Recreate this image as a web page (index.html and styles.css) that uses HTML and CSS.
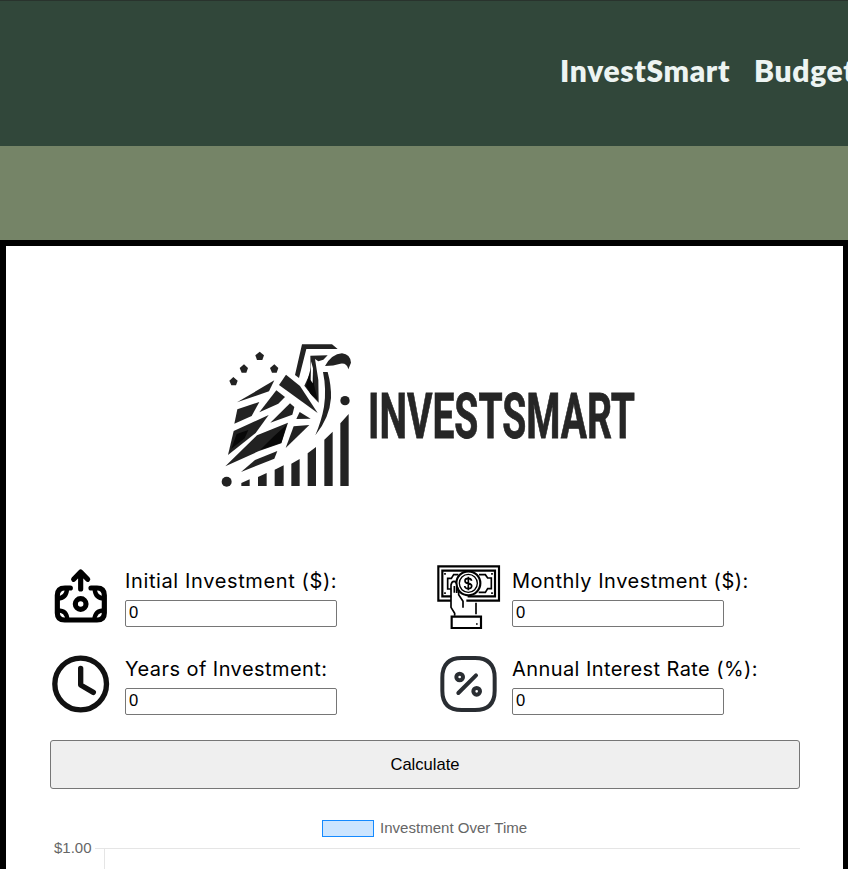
FILE: index.html
```html
<!DOCTYPE html>
<html lang="en">
<head>
<meta charset="utf-8">
<title>InvestSmart</title>
<link rel="stylesheet" href="styles.css">
</head>
<body>
<header class="header">
  <nav class="nav"><a class="nav-invest">InvestSmart</a><a class="nav-budget">Budget</a></nav>
</header>
<main class="card">
  <div class="logo">
    <svg class="eagle" viewBox="0 0 480 510" fill="#222">
      <path d="M276 43H366L383 57H289L267 144L255 135Z"/>
      <path d="M301 77L353 76L340 89L325 94L315 87L325 150L326 218L306 197L283 167L302 126Z"/>
      <path d="M345 108Q365 72 396 70Q421 73 423 98L415 118Q411 98 391 101Q371 108 345 108Z"/>
      <path d="M339 126H353Q364 165 363 204Q359 263 316 316Q335 270 342 230Q350 179 339 126Z"/>
      <path d="M228 134L270 168L323 249L207 165Z"/>
      <path d="M193 151L177 184L81 217Z"/>
      <path d="M199 181L225 201L205 221L148 247Z"/>
      <path d="M240 220L253 231L247 254L181 278Z"/>
      <path d="M82 238L148 216L125 258L73 281Z"/>
      <path d="M269 246L302 266L259 267Z"/>
      <path d="M71 303L176 255L137 309L54 375Z"/>
      <path d="M251 289L298 285L227 354Z"/>
      <path d="M141 316L234 278L214 340L145 364L46 409Z"/>
      <path d="M135 390L202 363L193 386L93 426Z"/>
      <path d="M94 459L119 448V468H94ZM144 441L170 429V468H144ZM194 419L221 406V468H194ZM244 401L269 387V468H244ZM293 370L318 351V468H293ZM343 329L368 305V468H343ZM391 280L416 252V468H391Z"/>
      <circle cx="405" cy="212" r="14"/><circle cx="50" cy="455" r="15"/>
      <path d="M149 65L162 76L157 90H141L136 76Z"/>
      <path d="M102 103L114 114L109 128H95L89 114ZM193 103L205 114L200 128H186L180 114ZM70 141L83 152L78 166H64L58 152Z"/>
      <path fill="#080808" d="M306 100L312 165L323 210L302 192L288 168ZM80 312L115 300L104 325L64 356ZM190 320L230 284L214 338L150 360Z"/>
      <path fill="#fff" d="M303 94L309 115L308 160L302 150Z"/>
    </svg>
    <svg class="wordmark" viewBox="0 0 280 60"><text x="8" y="53" textLength="267" lengthAdjust="spacingAndGlyphs">INVESTSMART</text></svg>
  </div>
  <form class="form">
    <div class="field">
      <svg viewBox="0 0 192 210" class="icon icon-left" fill="none" stroke="#000" stroke-width="15.5" stroke-linecap="round" stroke-linejoin="round">
        <path d="M83 66V16M62 37L83 15L104 37M52 63H36Q13 63 13 85V138Q13 159 35 159H132Q154 159 154 138V85Q154 63 132 63H114"/>
        <circle cx="83" cy="111" r="16"/>
        <path stroke-width="13" d="M14 94Q40 94 42 66M125 66Q127 94 153 94M14 130Q42 130 43 158M124 158Q126 130 153 130"/>
      </svg>
      <div class="control"><label class="l1">Initial Investment ($):</label><input value="0"></div>
    </div>
    <div class="field">
      <svg viewBox="0 0 192 210" class="icon icon-right" fill="none" stroke="#000" stroke-width="6.5">
        <path d="M42 101H4V-2H186V101H88M46 88H16V11H174V88H92"/>
        <path stroke-width="5" d="M64 23H50L43 34H32V66H43L47 76M126 23H145L152 33H163V65H152L145 76H125M24 18V23M165 18V23M24 76V81M165 76V81"/>
        <circle cx="94" cy="49" r="36"/><circle cx="94" cy="49" r="27" stroke-width="4"/>
        <path stroke-width="5" d="M104 41Q102 34 94 34Q84 34 84 41Q84 48 94 49Q105 51 104 58Q103 65 94 65Q84 65 83 57M94 29V70"/>
        <path fill="#fff" stroke="none" d="M43 60Q44 43 50 43Q60 42 60 59L65 83L78 105L75 145H51L43 125Z"/>
        <path stroke-width="5" d="M53 146V139L42 121V54Q44 43 51 43Q58 43 59 56V78M52 57V77M59 59Q66 66 65 83L78 103V122M117 107V142"/>
        <path d="M44 149H132V183H44Z"/><path stroke-width="4" d="M117 171H122"/>
      </svg>
      <div class="control"><label class="l2">Monthly Investment ($):</label><input value="0"></div>
    </div>
    <div class="field">
      <svg viewBox="0 0 192 210" class="icon icon-left" fill="none" stroke="#111" stroke-width="16" stroke-linecap="round" stroke-linejoin="round">
        <circle cx="83" cy="87" r="77.5"/><path d="M83 40V90L121 112"/>
      </svg>
      <div class="control"><label class="l3">Years of Investment:</label><input value="0"></div>
    </div>
    <div class="field">
      <svg viewBox="0 0 192 210" class="icon icon-right" fill="none" stroke="#292d32" stroke-width="12" stroke-linecap="round">
        <path d="M74 9H114Q173 9 173 68V107Q173 165 114 165H74Q16 165 16 107V68Q16 9 74 9ZM64 114L117 61"/>
        <circle cx="68" cy="66" r="10"/><circle cx="119" cy="109" r="10"/>
      </svg>
      <div class="control"><label class="l4">Annual Interest Rate (%):</label><input value="0"></div>
    </div>
  </form>
  <button class="calc" type="button">Calculate</button>
  <div class="legend"><span class="swatch"></span><span>Investment Over Time</span></div>
  <div class="chart"><span class="tick">$1.00</span><div class="plot"></div></div>
</main>
</body>
</html>
```
FILE: styles.css
```css
* { box-sizing: border-box; }
html { overflow: hidden; }
body {
  margin: 0;
  height: 869px;
  overflow: hidden;
  background: #758467;
  font-family: "Liberation Sans", Arial, sans-serif;
}
.header {
  height: 146px;
  margin-bottom: 94px;
  padding: 50px 0 0 560px;
  background: #31473a;
  border-top: 1px solid #29332d;
  overflow: hidden;
}
.nav {
  display: flex;
  width: 500px;
  color: #edf4f2;
  font: 800 30px/38px Lato, sans-serif;
  letter-spacing: 0.65px;
}
.nav-invest { width: 194px; }
.card {
  width: 849px;
  height: 629px;
  padding: 84px 43px 0 44px;
  border: 6px solid #000;
  border-bottom: 0;
  background: #fff;
  overflow: hidden;
}
.logo {
  display: flex;
  margin-left: 160px;
  height: 170px;
}
.eagle { width: 160px; height: 170px; flex: none; }
.wordmark { width: 280px; height: 60px; margin: 55px 0 0 -10px; flex: none; overflow: visible; }
.wordmark text { font: bold 63px/1 Roboto, sans-serif; fill: #262626; stroke: #262626; stroke-width: 0.8px; }
.form {
  display: grid;
  grid-template-columns: 387px 362px;
  grid-template-rows: 88px 88px;
  margin-top: 64px;
}
.field { display: flex; }
.icon { width: 64px; height: 70px; flex: none; overflow: visible; }
.icon-left { margin: 3px 8px 0 3px; }
.icon-right { margin: 2.5px 11px 0 0; }
.control { display: flex; flex-direction: column; width: 260px; }
label {
  height: 36px;
  font: 20px/34px Inter, sans-serif;
  white-space: nowrap;
}
.l1 { letter-spacing: 0.62px; }
.l2 { letter-spacing: 0.52px; }
.l3 { letter-spacing: 0.44px; }
.l4 { letter-spacing: 0.42px; }
input {
  width: 212px;
  height: 27px;
  padding: 1px 3px 3px;
  border: 1px solid #767676;
  border-radius: 2px;
  color: #000;
  font: 16.6px "Liberation Sans", Arial, sans-serif;
}
.calc {
  display: block;
  width: 750px;
  height: 49px;
  border: 1px solid #767676;
  border-radius: 3px;
  background: #efefef;
  color: #000;
  font: 16.6px "Liberation Sans", Arial, sans-serif;
}
.legend {
  display: flex;
  gap: 6px;
  margin: 29px 0 0 272px;
  color: #666;
  font-size: 15.05px;
  line-height: 20px;
}
.swatch {
  width: 52px;
  height: 17px;
  margin-top: 2px;
  border: 1.5px solid #158aff;
  background: #cce5ff;
}
.chart { display: flex; margin-top: 1px; color: #666; font-size: 15px; line-height: 18px; }
.tick { width: 45px; padding-left: 4px; }
.plot {
  flex: 1;
  height: 80px;
  margin-top: 9px;
  border-top: 1px solid #e5e5e5;
  background: linear-gradient(#e5e5e5, #e5e5e5) 9px 0 / 1px 100% no-repeat;
}
```
